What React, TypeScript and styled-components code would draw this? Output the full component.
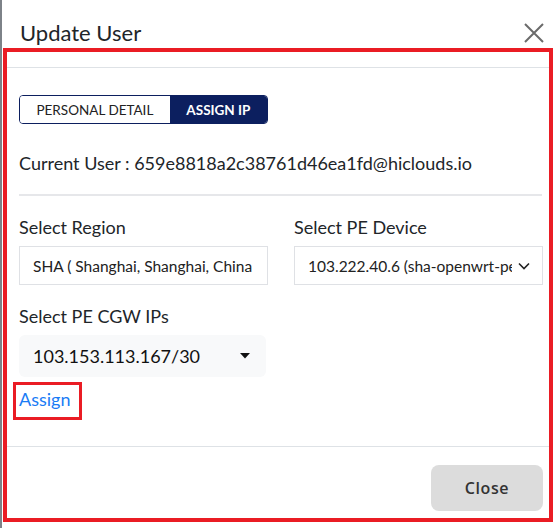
import React from "react";
import styled, { createGlobalStyle } from "styled-components";

const GlobalStyle = createGlobalStyle`
  html, body { margin: 0; padding: 0; background: #ffffff; }
  body {
    font-family: Lato, "Open Sans", "Liberation Sans", sans-serif;
    color: #212529;
    border-left: 2px solid #7d8288;
    min-height: 528px;
    box-sizing: border-box;
  }
  * { box-sizing: border-box; }
`;

const Modal = styled.div`
  width: 556px;
  height: 528px;
  background: #fff;
  display: flex;
  flex-direction: column;
`;

const Header = styled.div`
  height: 48px;
  display: flex;
  align-items: center;
  justify-content: space-between;
  padding: 0 12px 0 18px;
`;

const Title = styled.h5`
  margin: 0;
  font-size: 22px;
  font-weight: 400;
  line-height: 1.2;
  padding-top: 18px;
  color: #212529;
`;

const CloseX = styled.button`
  border: 0;
  background: transparent;
  padding: 0;
  width: 24px;
  height: 24px;
  margin-top: 18px;
  display: flex;
  align-items: center;
  justify-content: center;
  cursor: pointer;
`;

const Frame = styled.div`
  margin: 0 5px 6px 1px;
  border: 4px solid #ea1c24;
  height: 474px;
  display: flex;
  flex-direction: column;
  padding-top: 15px;
`;

const Divider = styled.div`
  border-top: 1px solid #dee2e6;
`;

const Body = styled.div`
  padding: 27px 7px 0 12px;
  display: flex;
  flex-direction: column;
  flex: 1;
`;

const Tabs = styled.div`
  display: flex;
  width: 249px;
  height: 29px;
  border: 1px solid #0c1f5f;
  border-radius: 4px;
  overflow: hidden;
`;

const Tab = styled.div<{ $active?: boolean }>`
  display: flex;
  align-items: center;
  justify-content: center;
  font-size: 13.5px;
  text-transform: uppercase;
  font-weight: ${(p) => (p.$active ? 700 : 400)};
  background: ${(p) => (p.$active ? "#0c1f5f" : "#fff")};
  color: ${(p) => (p.$active ? "#fff" : "#222")};
  width: ${(p) => (p.$active ? "98px" : "151px")};
`;

const CurrentUser = styled.div`
  margin-top: 27px;
  font-size: 18px;
  line-height: 24px;
`;

const Rule = styled.hr`
  margin: 19px 0 0 0;
  border: 0;
  border-top: 2px solid #e6e7ea;
`;

const Row = styled.div`
  display: grid;
  grid-template-columns: 249px 249px;
  column-gap: 26px;
  margin-top: 19px;
`;

const Field = styled.div`
  display: flex;
  flex-direction: column;
`;

const Label = styled.div`
  font-size: 18px;
  line-height: 24px;
  color: #212529;
  margin-bottom: 7px;
`;

const Input = styled.div`
  height: 39px;
  border: 1px solid #dfe1e5;
  display: flex;
  align-items: center;
  padding: 0 0 0 13px;
  font-size: 15.5px;
  color: #222;
  white-space: nowrap;
  overflow: hidden;
`;

const SelectBox = styled(Input)`
  padding-right: 12px;
  justify-content: space-between;
`;

const SelectText = styled.span`
  overflow: hidden;
  white-space: nowrap;
  flex: 1;
  min-width: 0;
  margin-right: 6px;
`;

const CgwField = styled(Field)`
  margin-top: 19px;
`;

const CgwSelect = styled.div`
  width: 247px;
  height: 42px;
  background: #f8f9fa;
  border-radius: 6px;
  display: flex;
  align-items: center;
  justify-content: space-between;
  padding: 0 16px 0 14px;
  font-size: 18px;
  color: #111;
`;

const AssignWrap = styled.div`
  margin: 5px 0 0 -6px;
  width: 69px;
  height: 38px;
  border: 3px solid #ea1c24;
  display: flex;
  align-items: center;
  padding: 0 0 5px 3px;
`;

const AssignLink = styled.a`
  font-size: 18px;
  color: #1a7cf5;
  text-decoration: none;
  cursor: pointer;
`;

const Footer = styled.div`
  border-top: 1px solid #dee2e6;
  height: 72px;
  display: flex;
  justify-content: flex-end;
  align-items: flex-start;
  padding: 18px 6px 0 0;
`;

const CloseButton = styled.button`
  width: 112px;
  height: 46px;
  border: 0;
  border-radius: 8px;
  background: #dcdcdc;
  color: #333;
  font-family: "Open Sans", Lato, sans-serif;
  font-weight: 600;
  font-size: 16px;
  letter-spacing: 0.6px;
  cursor: pointer;
`;

export default function App() {
  return (
    <>
      <GlobalStyle />
      <Modal>
        <Header>
          <Title>Update User</Title>
          <CloseX aria-label="close">
            <svg width="20" height="20" viewBox="0 0 20 20">
              <path d="M1 1 L19 19 M19 1 L1 19" stroke="#6b6b6b" strokeWidth="2" fill="none" />
            </svg>
          </CloseX>
        </Header>
        <Frame>
          <Divider />
          <Body>
            <Tabs>
              <Tab>Personal Detail</Tab>
              <Tab $active>Assign IP</Tab>
            </Tabs>
            <CurrentUser>Current User : 659e8818a2c38761d46ea1fd@hiclouds.io</CurrentUser>
            <Rule />
            <Row>
              <Field>
                <Label>Select Region</Label>
                <Input>SHA ( Shanghai, Shanghai, China</Input>
              </Field>
              <Field>
                <Label>Select PE Device</Label>
                <SelectBox>
                  <SelectText>103.222.40.6 (sha-openwrt-pe)</SelectText>
                  <svg width="12" height="8" viewBox="0 0 12 8">
                    <path d="M1 1.5 L6 6.5 L11 1.5" stroke="#222" strokeWidth="1.6" fill="none" />
                  </svg>
                </SelectBox>
              </Field>
            </Row>
            <CgwField>
              <Label>Select PE CGW IPs</Label>
              <CgwSelect>
                <span>103.153.113.167/30</span>
                <svg width="10" height="6" viewBox="0 0 10 6">
                  <path d="M0 0 L10 0 L5 5.5 Z" fill="#111" />
                </svg>
              </CgwSelect>
            </CgwField>
            <AssignWrap>
              <AssignLink>Assign</AssignLink>
            </AssignWrap>
          </Body>
          <Footer>
            <CloseButton>Close</CloseButton>
          </Footer>
        </Frame>
      </Modal>
    </>
  );
}
